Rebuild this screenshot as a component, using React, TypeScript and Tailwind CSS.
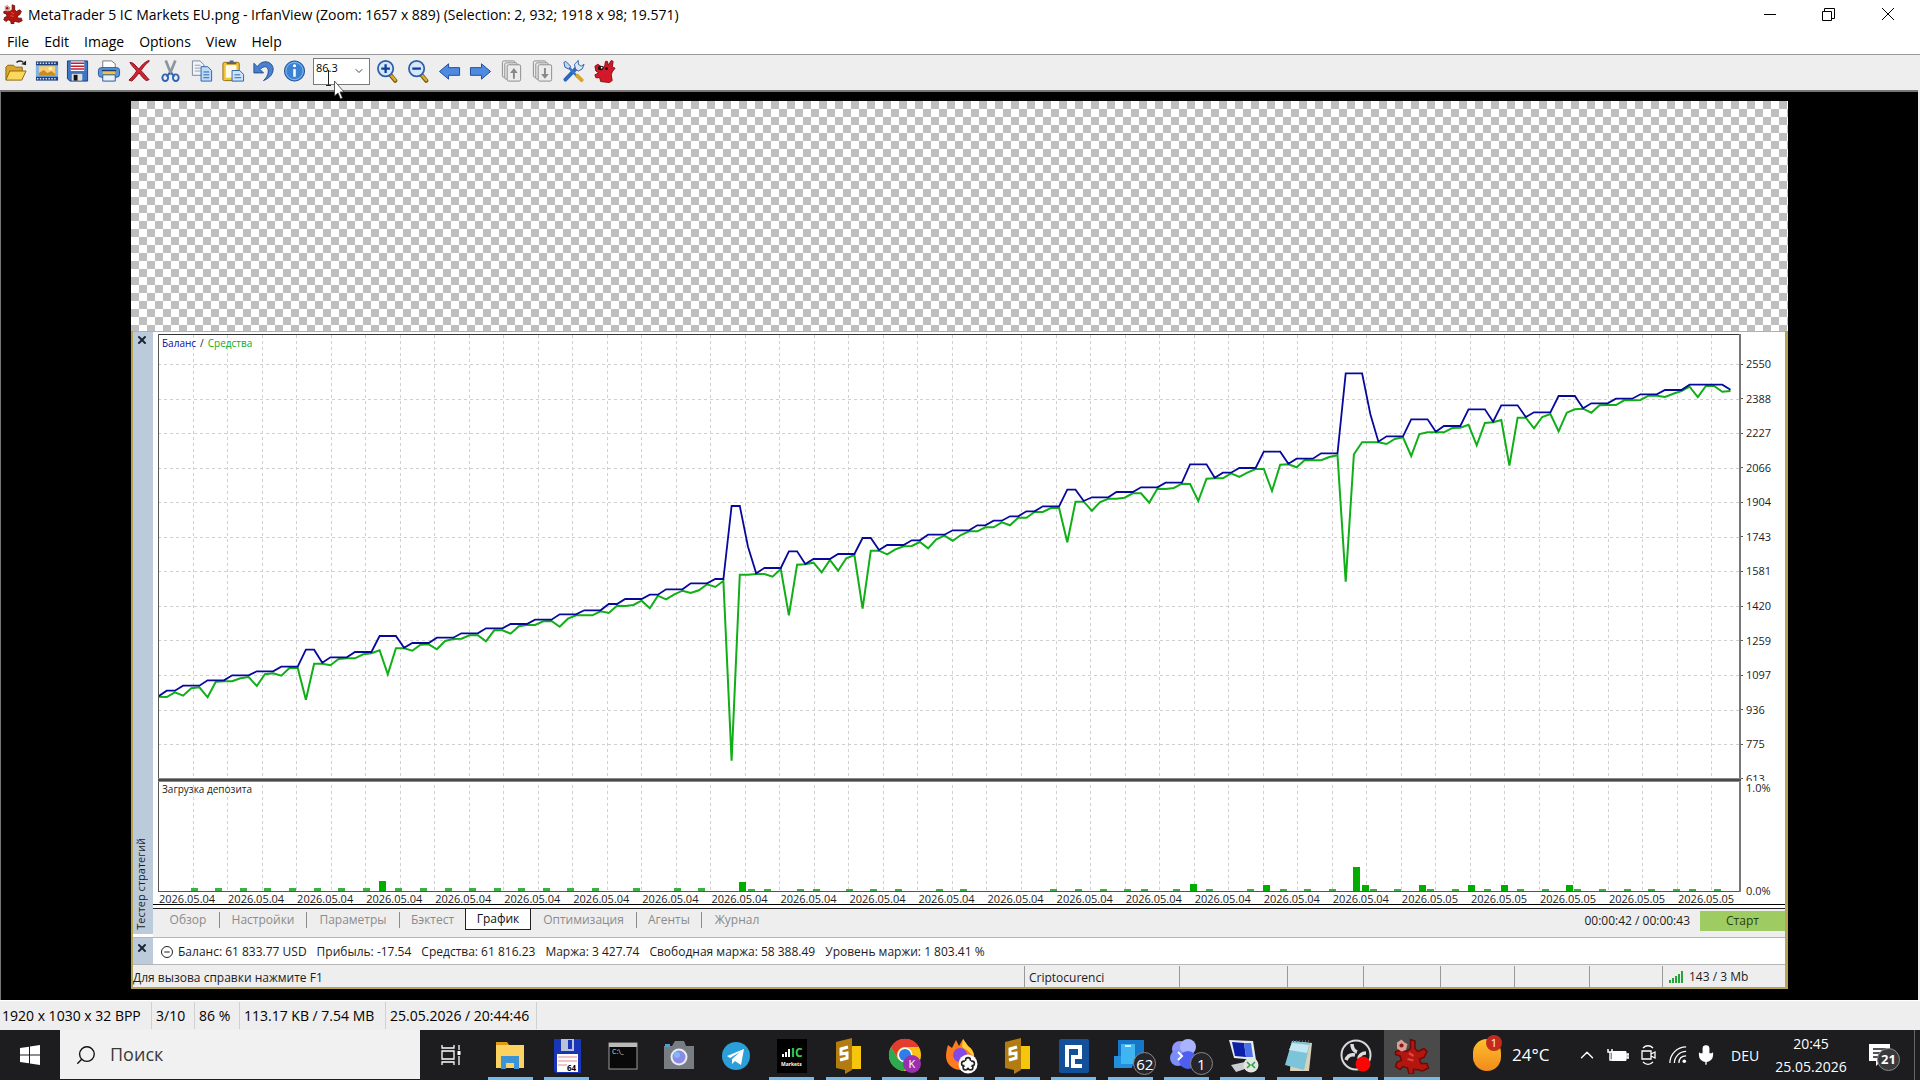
import { useState } from "react";
import { ChevronDown, ChevronUp, Mic, Minus, Search, X } from "lucide-react";

// [value, number of samples] runs, in thirds of a pixel
const balanceRuns = [
  [1132, 1], [1115, 2], [1100, 3], [1084, 3], [1069, 3], [1057, 3], [1043, 3], [992, 2], [1031, 1], [1015, 3],
  [999, 3], [951, 3], [986, 1], [972, 3], [956, 3], [943, 3], [928, 3], [915, 3], [902, 3], [886, 3],
  [874, 3], [855, 2], [840, 3], [827, 2], [811, 3], [793, 3], [780, 2], [561, 2], [683, 1], [763, 1],
  [747, 3], [697, 2], [735, 1], [720, 3], [705, 3], [657, 2], [693, 1], [678, 3], [664, 2], [647, 3],
  [634, 3], [619, 2], [605, 2], [592, 2], [577, 2], [562, 3], [512, 2], [546, 1], [535, 3], [519, 3],
  [505, 3], [491, 3], [436, 3], [476, 1], [461, 2], [447, 3], [398, 3], [434, 1], [419, 3], [403, 3],
  [163, 3], [285, 1], [368, 1], [352, 3], [301, 3], [338, 1], [321, 3], [271, 3], [308, 1], [259, 3],
  [294, 1], [280, 3], [231, 3], [268, 1], [253, 3], [239, 3], [226, 3], [213, 3], [197, 5], [212, 1],
];

const equity = [
  1133, 1134, 1120, 1130, 1108, 1105, 1135, 1088, 1087, 1087, 1078, 1074, 1101, 1066, 1063, 1070, 1047, 1046,
  1142, 1034, 1034, 1039, 1020, 1018, 1018, 1006, 1003, 994, 1066, 988, 988, 995, 977, 976, 991, 966, 960, 959,
  949, 949, 967, 934, 934, 944, 922, 918, 918, 907, 906, 923, 899, 889, 889, 889, 877, 882, 860, 861, 858, 845,
  868, 830, 841, 826, 815, 822, 814, 796, 804, 786, 1325, 767, 767, 765, 765, 773, 750, 889, 737, 736, 731, 760,
  723, 755, 718, 708, 869, 695, 695, 706, 691, 682, 681, 669, 688, 661, 650, 665, 648, 637, 637, 625, 625, 610,
  619, 596, 596, 579, 579, 567, 567, 670, 548, 548, 575, 549, 539, 539, 536, 523, 523, 551, 509, 510, 507, 494,
  495, 546, 479, 478, 478, 463, 474, 461, 450, 450, 516, 437, 436, 445, 423, 424, 424, 414, 409, 788, 406, 370,
  370, 370, 375, 360, 355, 411, 345, 340, 340, 340, 327, 326, 317, 379, 312, 310, 303, 440, 296, 296, 328, 294,
  285, 337, 281, 271, 269, 281, 259, 258, 258, 244, 244, 243, 230, 230, 234, 224, 216, 203, 234, 201, 201, 218,
  216,
];

// [sample index, bar height]
const load = [
  [4, 3], [7, 3], [10, 3], [13, 3], [16, 3], [19, 3], [22, 3], [25, 3], [27, 10], [29, 3], [32, 3], [35, 3],
  [38, 3], [41, 3], [44, 3], [47, 3], [50, 3], [53, 3], [58, 3], [63, 3], [66, 3], [71, 9], [72, 2], [74, 2],
  [78, 2], [80, 2], [84, 2], [87, 2], [90, 2], [95, 2], [98, 2], [109, 2], [112, 2], [115, 2], [118, 2],
  [120, 2], [124, 2], [126, 7], [128, 2], [133, 2], [135, 6], [137, 2], [140, 2], [143, 2], [146, 24],
  [147, 6], [148, 2], [151, 2], [154, 6], [155, 2], [158, 2], [160, 6], [162, 2], [164, 6], [166, 2],
  [169, 2], [172, 6], [173, 2], [176, 2], [179, 2], [182, 2], [185, 2], [187, 2], [190, 2],
];

const STEP = 8.1875;
const toPoints = (values: number[]) =>
  values.map((v, i) => `${(i * STEP + 0.5).toFixed(1)},${(v / 3 - 14).toFixed(1)}`).join(" ");
const balance = balanceRuns.flatMap(([v, n]) => Array(n).fill(v));

const scale = [2550, 2388, 2227, 2066, 1904, 1743, 1581, 1420, 1259, 1097, 936, 775, 613];

const testerTabs = [
  { label: "Обзор", width: "w-[63px]" },
  { label: "Настройки", width: "w-[87px]" },
  { label: "Параметры", width: "w-[93px]" },
  { label: "Бэктест", width: "w-[65px]" },
  { label: "График", width: "w-[66px]" },
  { label: "Оптимизация", width: "w-[106px]" },
  { label: "Агенты", width: "w-[65px]" },
  { label: "Журнал", width: "w-[70px]" },
];

const account = [
  "Баланс: 61 833.77 USD",
  "Прибыль: -17.54",
  "Средства: 61 816.23",
  "Маржа: 3 427.74",
  "Свободная маржа: 58 388.49",
  "Уровень маржи: 1 803.41 %",
];

const Splat = ({ size = "size-5" }: { size?: string }) => (
  <svg viewBox="0 0 24 24" className={size}>
    <path d="M11 1l3 1 0 5 2 2 4-2 2 2-2 4-3 1 1 3 4 0 1 3-4 2-4-1-2 0 0 3-3 0-1-4-3-1-2 2-3-2 1-3 3-1-1-3-3-1 0-2 4-1 3 1 3-2z" fill="#b3150f" stroke="#6b0a07" strokeWidth="1" />
    <path d="M2 3l3-2 2 2 2 1-1 4-3 1-3-2z" fill="#d9a09a" />
    <circle cx="5" cy="5" r="1.400" fill="#8d1712" />
    <path d="M10 10l3 2M9 14l4 1" stroke="#e2473f" strokeWidth="1.500" />
  </svg>
);

const Magnifier = ({ plus }: { plus?: boolean }) => (
  <>
    <path d="M15 16l5 6" stroke="#7a5c12" strokeWidth="4.500" strokeLinecap="round" />
    <path d="M15.500 16.500l4.500 5" stroke="#d9ab35" strokeWidth="2.500" strokeLinecap="round" />
    <circle cx="10" cy="9.500" r="8" fill="#d5e8fa" stroke="#2c5ea8" strokeWidth="1.800" />
    <path d={plus ? "M5.500 9.500h9M10 5v9" : "M5.500 9.500h9"} stroke="#0f3f9b" strokeWidth="2.400" />
  </>
);

const Pages = ({ down }: { down?: boolean }) => (
  <g fill="#ececec" stroke="#8b8b8b">
    <rect x="2.500" y="1.500" width="13" height="17" rx="1.500" />
    <rect x="5" y="3.500" width="13" height="17" rx="1.500" />
    <rect x="7.500" y="5.500" width="14" height="17" rx="1.500" />
    <path d={down ? "M13.500 9h2v6h3l-4 5-4-5h3z" : "M13.500 20h2v-6h3l-4-5-4 5h3z"} fill="#888" stroke="none" />
  </g>
);

const tools = [
  {
    name: "Open",
    icon: (
      <>
        <path d="M2 21V8l2-2h6l2 2h7v4" fill="#d9a52a" stroke="#8a6510" />
        <path d="M2 21.500L6 12h17l-4.500 9.500z" fill="#fbd75c" stroke="#8a6510" />
        <path d="M13 3c3-2 5-2 7 0" fill="none" stroke="#222" strokeWidth="1.500" />
        <path d="M23 1v5l-5-1z" fill="#222" />
      </>
    ),
  },
  {
    name: "Slideshow",
    icon: (
      <>
        <rect x="1" y="2" width="23" height="20" fill="#1f3f7c" />
        <rect x="1" y="6" width="23" height="12" fill="#7bb4ea" />
        <rect x="4" y="7" width="17" height="10" fill="#f9cf72" />
        <path d="M4 17v-3l5-3 4 3 4-2 4 3v2z" fill="#c98b22" />
        <circle cx="16" cy="9.500" r="2" fill="#fff3b8" />
        <path d="M2 4h21M2 20h21" stroke="#d6e4f8" strokeWidth="1.500" strokeDasharray="1.500 1.500" />
      </>
    ),
  },
  {
    name: "Save",
    icon: (
      <>
        <path d="M1.500 1.500h21v21H4l-2.500-2.500z" fill="#3d76c4" stroke="#1b3e7d" />
        <rect x="5" y="2" width="14" height="10" fill="#fff" />
        <path d="M5 4h14M5 7h14M5 10h14" stroke="#c31d33" strokeWidth="1.600" />
        <rect x="6" y="15" width="11" height="7" fill="#ddd" />
        <rect x="8" y="16" width="4" height="6" fill="#111" />
      </>
    ),
  },
  {
    name: "Print",
    icon: (
      <>
        <path d="M6 9V1.500h9l4 3V9" fill="#fff" stroke="#777" />
        <rect x="1.500" y="8.500" width="22" height="10" rx="3" fill="#5f97dc" stroke="#28538f" />
        <rect x="6" y="12" width="13" height="4" fill="#f0c33c" />
        <path d="M6 16h13v6.500H6z" fill="#e8f2ff" stroke="#28538f" />
        <path d="M5 11.500h15" stroke="#1f3f75" strokeWidth="1.500" />
      </>
    ),
  },
  {
    name: "Delete",
    icon: (
      <path d="M2 3c4 0 7 5 9.500 7C14 6 18 2 22 1l0 1c-4 3-6 6-8.500 9.500 3 3 5 6 8.500 9.500l-3 1c-3-2-5-5-7.500-8C9 17 7 20 4 22.500l-3-1c3-3 6-6 8-9.500C7 9 4 7 2 3z" fill="#cf2433" stroke="#8d0e1b" />
    ),
  },
  {
    name: "Cut",
    icon: (
      <>
        <path d="M7 1l6 15M17 1l-6 15" stroke="#8d959f" strokeWidth="2.800" />
        <path d="M11 14l-3 4M13 14l3 4" stroke="#2e64b4" strokeWidth="2" />
        <ellipse cx="6.500" cy="19" rx="3" ry="3.500" fill="none" stroke="#2e64b4" strokeWidth="2" />
        <ellipse cx="17.500" cy="19" rx="3" ry="3.500" fill="none" stroke="#2e64b4" strokeWidth="2" />
      </>
    ),
  },
  {
    name: "Copy",
    icon: (
      <>
        <path d="M2.500 1.500h8l4 4v11h-12z" fill="#f1f5fa" stroke="#7a8697" />
        <path d="M5 6h6M5 9h6M5 12h6" stroke="#8f9cae" />
        <path d="M11.500 7.500h7l4 4v11h-11z" fill="#bddaf8" stroke="#2b62ae" />
        <path d="M14 13h6M14 16h6M14 19h6" stroke="#2b62ae" />
      </>
    ),
  },
  {
    name: "Paste",
    icon: (
      <>
        <rect x="2" y="3" width="17" height="19" rx="1.500" fill="#f2c53d" stroke="#96700e" />
        <rect x="5" y="6" width="11" height="13" fill="#fffbe6" />
        <path d="M6 5V3h3V1h4v2h3v2z" fill="#5b6470" />
        <path d="M11.500 11.500h8l4 4v7h-12z" fill="#cde4fb" stroke="#2b62ae" />
        <path d="M14 16h6M14 19h7" stroke="#2b62ae" />
      </>
    ),
  },
  {
    name: "Undo",
    icon: (
      <path d="M2 4v10h10l-3.500-3.500C12 6 17 7 17 12c0 4-2 7-5 10 7-3 10-7 10-12C22 2 11-1 5.500 7.500z" fill="#4a81cf" stroke="#1f4c93" />
    ),
  },
  {
    name: "Information",
    icon: (
      <>
        <circle cx="12" cy="12" r="10.500" fill="#3c82d4" stroke="#1e4f97" />
        <circle cx="12" cy="12" r="9" fill="none" stroke="#8bbcf0" />
        <path d="M12 10v8" stroke="#fff" strokeWidth="2.600" />
        <circle cx="12" cy="6.500" r="1.600" fill="#fff" />
      </>
    ),
  },
];

const moreTools = [
  { name: "Zoom in", icon: <Magnifier plus /> },
  { name: "Zoom out", icon: <Magnifier /> },
  { name: "Previous", icon: <path d="M1.500 12.500L11 4.500v4h11.500v8H11v4z" fill="#4e8ae0" stroke="#1c4a9c" /> },
  { name: "Next", icon: <path d="M22.500 12.500L13 4.500v4H1.500v8H13v4z" fill="#4e8ae0" stroke="#1c4a9c" /> },
  { name: "Previous page", icon: <Pages /> },
  { name: "Next page", icon: <Pages down /> },
  {
    name: "Settings",
    icon: (
      <>
        <path d="M3.500 21L15 9" stroke="#2e66b8" strokeWidth="4" strokeLinecap="round" />
        <path d="M14 10l-1-5 4-4 0 4 3 2 3-2-2 5-4 2z" fill="#dbe7f6" stroke="#2e5fa6" />
        <path d="M7 8l9 10" stroke="#3873c9" strokeWidth="2.500" />
        <path d="M2 3l2-1 5 5-2 3-4-2z" fill="#c5d6ea" stroke="#2e5fa6" />
        <path d="M16 17l4.500 4.500" stroke="#d9a52a" strokeWidth="4" strokeLinecap="round" />
      </>
    ),
  },
  {
    name: "About",
    icon: (
      <>
        <path d="M2 7l3-2 3 2 4 1 1-6 2 0 1 4 3-5 2 1-1 6 3 1-3 4-1 3 1 6-3 2-9-1-1-4-4 0-1-3 4-2-3-2z" fill="#d3182a" stroke="#8e0a17" />
        <ellipse cx="8" cy="9" rx="3" ry="2.200" fill="#111" />
        <circle cx="9" cy="8.500" r="0.900" fill="#fff" />
        <circle cx="14" cy="9.500" r="1.500" fill="#111" />
      </>
    ),
  },
];

const SublimeIcon = (
  <>
    <path d="M18 8h13v23H18z" fill="#f5c60c" />
    <path d="M6 4l16-4v32L15 36V32L6 30z" fill="#b27c10" />
    <path d="M18 9l-7 2v5l6-1v5l-7 2" fill="none" stroke="#fff" strokeWidth="3" />
  </>
);

const taskbarApps: { name: string; icon: any; running?: boolean; active?: boolean; badge?: string }[] = [
  {
    name: "Explorer",
    running: true,
    icon: (
      <>
        <path d="M4 4h11l3 4H4z" fill="#dd9a16" />
        <path d="M4 7h28v23H4z" fill="#fcd260" />
        <path d="M9 31V18h18v13h-5v-6h-8v6z" fill="#3a94d6" />
      </>
    ),
  },
  {
    name: "Total Commander",
    running: true,
    icon: (
      <>
        <path d="M5 1h27v34H7l-2-2z" fill="#1a35b8" />
        <rect x="12" y="1" width="13" height="12" fill="#b8c3d6" />
        <rect x="19" y="2" width="4" height="9" fill="#1a35b8" />
        <rect x="8" y="16" width="21" height="18" fill="#fff" />
        <path d="M9 19h19M9 23h19M9 27h9" stroke="#e08b8b" />
        <text x="18" y="33" fontSize="8" className="font-bold">64</text>
      </>
    ),
  },
  {
    name: "Command Prompt",
    icon: (
      <>
        <rect x="4" y="5" width="28" height="26" fill="#090909" stroke="#9b9b9b" />
        <path d="M4 5h28v4H4z" fill="#b9b9b9" />
        <text x="7" y="16" fontSize="7" fill="#ddd">C:\_</text>
      </>
    ),
  },
  {
    name: "Camera",
    icon: (
      <>
        <path d="M3 8h8l3-5h9l2 5h8v23H3z" fill="#787d83" />
        <path d="M4 6h5v3H4z" fill="#44a4cf" />
        <circle cx="18" cy="19" r="8.500" fill="#e9ecf2" />
        <circle cx="18" cy="19" r="6.500" fill="#8b8be6" />
        <circle cx="16" cy="17" r="3" fill="#7fb8ff" />
      </>
    ),
  },
  {
    name: "Telegram",
    icon: (
      <>
        <circle cx="18" cy="18" r="14" fill="#2a9fda" />
        <path d="M9 18l17-7-3 16-6-4-3 3v-5l8-7-10 6z" fill="#fff" />
      </>
    ),
  },
  {
    name: "IC Markets",
    running: true,
    icon: (
      <>
        <rect x="3" y="1" width="30" height="34" fill="#000" />
        <path d="M9 19v-3M12 19v-5M15 19v-8" stroke="#fff" strokeWidth="2" />
        <text x="17" y="19" fontSize="12" fill="#39d353" className="font-bold">IC</text>
        <text x="7" y="28" fontSize="5" fill="#fff" className="font-bold">Markets</text>
      </>
    ),
  },
  { name: "Sublime Text", running: true, icon: SublimeIcon },
  {
    name: "Chrome",
    running: true,
    icon: (
      <>
        <circle cx="18" cy="17" r="16" fill="#fbc116" />
        <path d="M4 9a16 16 0 0 1 28 0H18a8 8 0 0 0-7 12z" fill="#e33b2e" />
        <path d="M4 9a16 16 0 0 0 13 24l6-11-5 3-7-4z" fill="#2da94f" />
        <circle cx="18" cy="17" r="7.500" fill="#fff" />
        <circle cx="18" cy="17" r="6" fill="#2f7de9" />
        <circle cx="25" cy="26" r="9" fill="#9c2fae" />
        <text x="21.500" y="30" fontSize="11" fill="#fff">K</text>
      </>
    ),
  },
  {
    name: "Firefox",
    running: true,
    icon: (
      <>
        <path d="M5 7l4 3 4-8 3 6 4-7 5 7c5 3 7 8 6 14-2 7-8 11-14 10C8 31 3 25 3 18c0-4 1-8 2-11z" fill="#ff7a1f" />
        <path d="M20 1l5 7c4 3 6 7 6 11l-6-6-6-4z" fill="#ffcf3a" />
        <circle cx="17" cy="17" r="7" fill="#8448e8" />
        <circle cx="25" cy="26" r="9.500" fill="#fff" />
        <g fill="none" stroke="#222" strokeWidth="1.600">
          <circle cx="25" cy="22" r="2.400" />
          <circle cx="21" cy="25.500" r="2.400" />
          <circle cx="29" cy="25.500" r="2.400" />
          <circle cx="22.500" cy="29.500" r="2.400" />
          <circle cx="27.500" cy="29.500" r="2.400" />
        </g>
        <circle cx="25" cy="26" r="3.800" fill="#fff" />
      </>
    ),
  },
  { name: "Sublime Text 2", running: true, icon: SublimeIcon },
  {
    name: "Password Depot",
    running: true,
    icon: (
      <>
        <rect x="3" y="1" width="30" height="34" rx="2" fill="#12509a" />
        <path d="M11 29V9h13v10h-7v9h9" fill="none" stroke="#fff" strokeWidth="4" />
      </>
    ),
  },
  {
    name: "Phone Link",
    running: true,
    badge: "62",
    icon: (
      <>
        <rect x="6" y="2" width="26" height="26" fill="#1677c8" />
        <rect x="2" y="18" width="18" height="12" fill="#2390de" />
        <rect x="9" y="6" width="14" height="20" fill="#3fb6f2" />
        <path d="M13 8h6" stroke="#fff" strokeWidth="1.500" />
      </>
    ),
  },
  {
    name: "Terminal",
    running: true,
    badge: "1",
    icon: (
      <>
        <circle cx="12" cy="11" r="8" fill="#8f95fb" />
        <circle cx="20" cy="9" r="8" fill="#a9b4fd" />
        <circle cx="10" cy="20" r="8" fill="#7b8df9" />
        <circle cx="20" cy="22" r="9" fill="#4d5ff0" />
        <path d="M10 14l4 4-4 4" fill="none" stroke="#fff" strokeWidth="2" />
      </>
    ),
  },
  {
    name: "Remote Desktop",
    running: true,
    icon: (
      <>
        <path d="M4 2l24 1 3 19-22-2z" fill="#e6e9ee" />
        <path d="M7 4l12 1 2 14-11-1z" fill="#0b1fa8" />
        <path d="M19 5l7 0 2 14-7 0z" fill="#4a72e8" />
        <path d="M6 27l14-3 6 5-15 5z" fill="#c9ccd1" />
        <circle cx="26" cy="27" r="7.500" fill="#e2e6e3" />
        <path d="M22 24l3 3-3 3M30 24l-3 3 3 3" fill="none" stroke="#29a03d" strokeWidth="1.500" />
      </>
    ),
  },
  {
    name: "Notepad",
    running: true,
    icon: (
      <>
        <path d="M11 3l20 2-3 28H9z" fill="#d9d2b8" />
        <path d="M11 3l18 2-6 27-19-5z" fill="#7cc4da" />
        <path d="M11 5l17 2-2 8-18-3z" fill="#c4e7f0" />
        <path d="M12 3h18" stroke="#555" strokeWidth="2" strokeDasharray="1 2" />
      </>
    ),
  },
  {
    name: "OBS Studio",
    running: true,
    icon: (
      <>
        <circle cx="18" cy="17" r="14.500" fill="#1c1b1f" stroke="#d9d9d9" strokeWidth="2" />
        <path d="M14 6c0 5 2 7 5 8M8 22c2-5 5-6 9-5M28 15c-4 0-7 2-7 6" fill="none" stroke="#ddd" strokeWidth="3.500" />
        <circle cx="25" cy="26" r="7.500" fill="#fd0505" />
      </>
    ),
  },
  { name: "IrfanView", running: true, active: true, icon: <Splat size="size-9" /> },
];

const ToolButton = ({ name, icon }: any) => (
  <button aria-label={name} className="flex w-[31px] items-center justify-center">
    <svg viewBox="0 0 25 24" className="h-6 w-6">{icon}</svg>
  </button>
);

const Chart = () => (
  <svg viewBox="0 0 1583 562" preserveAspectRatio="none" className="block h-[562px] w-full">
    <g stroke="#d0d0d0" strokeDasharray="3 3">
      {Array.from({ length: 45 }, (_, k) => {
        const x = Math.round((k + 1) * 34.52) + 0.5;
        return <line key={k} x1={x} x2={x} y1="2" y2="558" />;
      })}
      {scale.slice(0, 12).map((value, k) => {
        const y = Math.round(31 + k * 34.55) + 0.5;
        return <line key={value} x1="0" x2="1582" y1={y} y2={y} />;
      })}
    </g>
    <g fill="#00ae00">
      {load.map(([i, h]) => (
        <rect key={i} x={Math.round(i * STEP)} y={558 - h} width="7" height={h} fill={h < 4 ? "#3fae45" : "#00ae00"} />
      ))}
    </g>
    <polyline points={toPoints(equity)} fill="none" stroke="#10ae17" strokeWidth="2" />
    <polyline points={toPoints(balance)} fill="none" stroke="#08089c" strokeWidth="1.800" />
    <path d="M0 1.500H1583" stroke="#333" />
    <path d="M0.500 1V559M0 558.500H1583" stroke="#555" />
    <path d="M1582 1V559" stroke="#777" strokeWidth="2" />
    <path d="M0 447H1583" stroke="#8a8a8a" strokeWidth="4" />
    <path d="M0 447H1583" stroke="#4a4a4a" strokeWidth="2" />
  </svg>
);

const StrategyTester = () => {
  const [tab, setTab] = useState("График");
  return (
    <section className="border-l-2 border-r-3 border-b-2 border-[#b5a552] bg-white text-[#1c1c1c]">
      <div className="flex h-[606px] border-t border-[#b0b0b0]">
        <aside className="flex h-[602px] w-5 flex-col items-start justify-between bg-[#bccbdc] pb-1 pt-[2px]">
          <button aria-label="Закрыть тестер" className="ml-[3px]">
            <X className="size-3" strokeWidth={4} color="#1b2638" />
          </button>
          <span className="rotate-180 text-[11px] leading-4 [writing-mode:vertical-rl]">Тестер стратегий</span>
        </aside>

        <div className="flex min-w-0 flex-1 flex-col">
          <div className="flex pl-[5px] pt-px">
            <div className="relative min-w-0 flex-1">
              <Chart />
              <p className="absolute left-1 top-[3px] flex gap-1 text-[10px] leading-[14px]">
                <span className="text-[#0a0a9e]">Баланс</span>
                <span>/</span>
                <span className="text-[#10ab17]">Средства</span>
              </p>
              <p className="absolute left-1 top-[449px] text-[10px] leading-[14px]">Загрузка депозита</p>
            </div>
            <div className="flex w-11 flex-col text-[11px] leading-[14px]">
              <div className="h-[448px] overflow-hidden pt-[14px]">
                <ul className="grid h-[449px] auto-rows-fr items-center">
                  {scale.map((value) => (
                    <li key={value} className="flex items-center gap-[3px]">
                      <span className="h-px w-[2px] bg-[#555]" />
                      {value}
                    </li>
                  ))}
                </ul>
              </div>
              <div className="flex h-[117px] flex-col justify-between pl-[5px]">
                <span>1.0%</span>
                <span>0.0%</span>
              </div>
            </div>
          </div>
          <div className="-mt-1 ml-[6px] mr-[38px] flex h-[10px] items-center text-[11px] leading-3">
            {Array.from({ length: 23 }, (_, k) => (
              <span key={k} className="min-w-0 flex-1 whitespace-nowrap">
                {k < 18 ? "2026.05.04" : "2026.05.05"}
              </span>
            ))}
          </div>
          <div className="h-1 border-t border-black" />

          <div className="flex h-[29px] items-start border-t border-[#222] bg-[#eeeeee]">
            <nav className="flex pl-1">
              {testerTabs.map(({ label, width }) => (
                <button
                  key={label}
                  onClick={() => setTab(label)}
                  className={`${width} h-[21px] text-[12px] leading-4 ${
                    tab === label ? "border-x border-b border-[#222] bg-white text-[#111]" : "text-[#8b8b8b]"
                  }`}
                >
                  <span
                    className={
                      tab === label || label === "Бэктест" || label === "Журнал"
                        ? "block"
                        : "block border-r border-[#8b8b8b]"
                    }
                  >
                    {label}
                  </span>
                </button>
              ))}
            </nav>
            <span className="ml-auto pt-1 text-[12px] leading-4">00:00:42 / 00:00:43</span>
            <button className="ml-[10px] mt-[2px] h-5 w-[85px] bg-[#9fcc62] text-[12px] leading-4 text-[#254015]">Старт</button>
          </div>
        </div>
      </div>

      <div className="flex h-7 border-y border-[#b5b5b5]">
        <div className="flex w-5 bg-[#bccbdc] pl-[3px] pt-1">
          <button aria-label="Закрыть терминал" className="h-3">
            <X className="size-3" strokeWidth={4} color="#1b2638" />
          </button>
        </div>
        <div className="flex items-center pl-2 pt-px text-[12px] leading-4">
          <span className="flex size-3 items-center justify-center rounded-full border border-[#222]">
            <Minus className="size-2" strokeWidth={3} />
          </span>
          <ul className="flex gap-[10px] pl-[5px]">
            {account.map((item) => (
              <li key={item}>{item}</li>
            ))}
          </ul>
        </div>
      </div>

      <footer className="flex h-[22px] bg-[#eeeeee] pt-px text-[12px] leading-6">
        <span className="flex-1">Для вызова справки нажмите F1</span>
        <span className="w-[155px] border-l border-[#999] pl-1">Criptocurenci</span>
        <span className="w-[108px] border-l border-[#999]" />
        <span className="w-[76px] border-l border-[#999]" />
        <span className="w-[77px] border-l border-[#999]" />
        <span className="w-[74px] border-l border-[#999]" />
        <span className="w-[75px] border-l border-[#999]" />
        <span className="w-[73px] border-l border-[#999]" />
        <span className="flex w-[123px] items-center gap-[5px] border-l border-[#999] pl-[6px]">
          <svg viewBox="0 0 15 12" className="h-3 w-[15px]">
            <path d="M1 12V9M4 12V7M7 12V5M10 12V3M13 12V0" stroke="#25a53a" strokeWidth="2" />
          </svg>
          143 / 3 Mb
        </span>
      </footer>
    </section>
  );
};

const Taskbar = () => (
  <footer className="flex h-[50px] bg-[#1d1c1e] text-white">
    <button aria-label="Пуск" className="flex w-[60px] items-center justify-center">
      <svg viewBox="0 0 20 20" className="size-5" fill="#fff">
        <path d="M0 3l9-1.300V9.500H0zM10 1.500L20 0v9.500H10zM0 10.500h9v7.800L0 17zM10 10.500h10V20l-10-1.500z" />
      </svg>
    </button>
    <label className="mb-px flex w-[360px] items-center gap-[13px] bg-[#f1f1f1] pl-[15px]">
      <Search className="size-[22px] -scale-x-100" strokeWidth={1.5} color="#111" />
      <input aria-label="Поиск" placeholder="Поиск" className="w-60 text-[18px] outline-none placeholder:text-[#3a3a3a]" />
    </label>
    <button aria-label="Представление задач" className="flex w-[62px] items-center justify-center">
      <svg viewBox="0 0 22 20" className="h-5 w-[22px]" fill="none" stroke="#fff" strokeWidth="1.300">
        <path d="M2 0v3h12V0M2 20v-3h12v3M2 6h12v8H2zM19 0v5M19 11v9" />
        <path d="M19 6v4" strokeWidth="3" />
      </svg>
    </button>
    <nav className="flex w-[958px]">
      {taskbarApps.map(({ name, icon, running, active, badge }) => (
        <button
          key={name}
          aria-label={name}
          className={`relative flex flex-1 flex-col items-center justify-between ${active ? "bg-[#4a4a4b]" : ""}`}
        >
          <span className="flex h-[47px] items-center pt-1">
            {active ? icon : <svg viewBox="0 0 36 36" className="size-9">{icon}</svg>}
          </span>
          {running && <span className={`h-[3px] bg-[#76b9ed] ${active ? "w-full" : "w-[45px]"}`} />}
          {badge && (
            <span className="absolute bottom-[5px] right-[2px] flex h-[23px] min-w-[23px] items-center justify-center rounded-full border border-[#888] bg-[#26262a] text-[15px] leading-4">
              {badge}
            </span>
          )}
        </button>
      ))}
    </nav>

    <div className="ml-auto flex items-center">
      <button className="flex items-center gap-[11px]">
        <span className="relative block h-8 w-7 rounded-full bg-linear-to-b from-[#fcc02c] to-[#f18a1c]">
          <span className="absolute -right-px -top-1 flex size-4 items-center justify-center rounded-full bg-[#c42b1c] text-[11px]">1</span>
        </span>
        <span className="w-[64px] text-left text-[17px]">24°C</span>
      </button>
      <ChevronUp className="w-[22px]" strokeWidth={1.5} />
      <svg viewBox="0 0 22 14" className="ml-[9px] h-[14px] w-[22px]">
        <path d="M5 3.500h14v9H5z" fill="#fff" stroke="#fff" />
        <path d="M20 6h2v4h-2zM1 1v3h4V1M3 4v8h3" stroke="#fff" fill="none" strokeWidth="1.500" />
      </svg>
      <svg viewBox="0 0 20 24" className="ml-[9px] h-6 w-5" fill="none" stroke="#fff" strokeWidth="1.300">
        <path d="M5 5c3-3 7-3 10 0M5 19c3 3 7 3 10 0M4 8h9v8H4zM13 11l4-2v6l-4-2" />
      </svg>
      <svg viewBox="0 0 20 20" className="ml-[11px] size-[18px]" fill="none" stroke="#fff" strokeWidth="1.400">
        <path d="M1 19C1 9 9 1 19 1M6 19C6 12 12 6 19 6M11 19c0-5 3-8 8-8" />
        <circle cx="17" cy="17" r="2" fill="#fff" stroke="none" />
      </svg>
      <Mic className="ml-2 size-[22px]" fill="#fff" strokeWidth={1.5} />
      <span className="ml-[14px] w-[43px] text-[14px]">DEU</span>
      <div className="w-[74px] text-center text-[14px] leading-[23px]">
        <div>20:45</div>
        <div>25.05.2026</div>
      </div>
      <button aria-label="Уведомления" className="relative ml-[21px] h-8 w-9">
        <svg viewBox="0 0 22 22" className="size-[22px]">
          <path d="M0 0h21v17h-9l-5 5v-5H0z" fill="#fff" />
          <path d="M4 5h13M4 9h13M4 13h9" stroke="#1d1c1e" strokeWidth="1.500" />
        </svg>
        <span className="absolute bottom-0 left-2 flex size-[23px] items-center justify-center rounded-full border border-[#888] bg-[#3a3a3c] text-[13px] font-bold">21</span>
      </button>
      <span className="ml-[9px] mr-[5px] h-[50px] w-px bg-[#666]" />
    </div>
  </footer>
);

export default function App() {
  return (
    <div className="relative flex min-h-screen flex-col bg-[#eeeeee] font-['Open_Sans','Noto_Sans',sans-serif] text-black">
      {/* Title bar */}
      <header className="flex h-7 items-center bg-white pl-[3px]">
        <Splat />
        <h1 className="ml-[5px] flex-1 text-[14px]">
          MetaTrader 5 IC Markets EU.png - IrfanView (Zoom: 1657 x 889) (Selection: 2, 932; 1918 x 98; 19.571)
        </h1>
        <button aria-label="Minimize" className="flex w-[58px] justify-center">
          <span className="h-px w-3 bg-black" />
        </button>
        <button aria-label="Restore" className="flex w-[58px] justify-center">
          <svg viewBox="0 0 13 13" className="size-[13px]" fill="none" stroke="#000">
            <path d="M0.500 3.500h9v9h-9zM2.500 3V0.500h10v10H10" />
          </svg>
        </button>
        <button aria-label="Close" className="mr-[2px] flex w-[61px] justify-center">
          <svg viewBox="0 0 12 12" className="size-3" stroke="#000">
            <path d="M0 0l12 12M12 0L0 12" />
          </svg>
        </button>
      </header>

      {/* Menu */}
      <nav className="flex h-[26px] items-center gap-[15px] bg-white pl-[7px] text-[14px]">
        {["File", "Edit", "Image", "Options", "View", "Help"].map((item) => (
          <button key={item}>{item}</button>
        ))}
      </nav>

      {/* Toolbar */}
      <div className="flex h-9 items-center border-t border-[#999] pb-[3px]">
        {tools.map((tool) => (
          <ToolButton key={tool.name} {...tool} />
        ))}
        <div className="relative ml-[3px] mr-[2px] h-[27px] w-[57px] border border-[#7a7a7a] bg-white">
          <select aria-label="Zoom" className="block h-[18px] w-full appearance-none pl-[2px] text-[11px] leading-[18px] outline-none">
            <option>86.3</option>
          </select>
          <ChevronDown className="pointer-events-none absolute right-1 top-[6px] size-3" color="#444" />
        </div>
        {moreTools.map((tool) => (
          <ToolButton key={tool.name} {...tool} />
        ))}
      </div>

      {/* Viewer */}
      <main className="mr-[2px] flex-1 border-l border-t-2 border-[#777] bg-black pb-[10px] pl-[130px] pr-[130px] pt-[9px]">
        <div className="h-[230px] bg-[repeating-conic-gradient(#fff_0_25%,#c0bfc0_0_50%)] bg-[length:16px_16px]" />
        <StrategyTester />
      </main>

      {/* Image info */}
      <div className="flex h-[30px] items-stretch border-t border-white py-px text-[14px] leading-7">
        <span className="w-[152px] whitespace-nowrap border-r border-[#d0d0d0] pl-[2px]">1920 x 1030 x 32 BPP</span>
        <span className="w-[43px] whitespace-nowrap border-r border-[#d0d0d0] pl-1">3/10</span>
        <span className="w-[45px] whitespace-nowrap border-r border-[#d0d0d0] pl-1">86 %</span>
        <span className="w-[146px] whitespace-nowrap border-r border-[#d0d0d0] pl-1">113.17 KB / 7.54 MB</span>
        <span className="w-[151px] whitespace-nowrap border-r border-[#d0d0d0] pl-1">25.05.2026 / 20:44:46</span>
      </div>

      <Taskbar />

      {/* Text caret and mouse pointer over the zoom box */}
      <svg viewBox="0 0 20 30" className="pointer-events-none absolute left-[322px] top-[70px] h-[30px] w-6">
        <path d="M4.500 0v15M2 15.500h5" stroke="#222" />
        <path d="M10.500 11v15l3.500-3 2.500 6 2-1-2.500-6h4z" fill="#fff" stroke="#333" strokeWidth="0.800" />
      </svg>
    </div>
  );
}
